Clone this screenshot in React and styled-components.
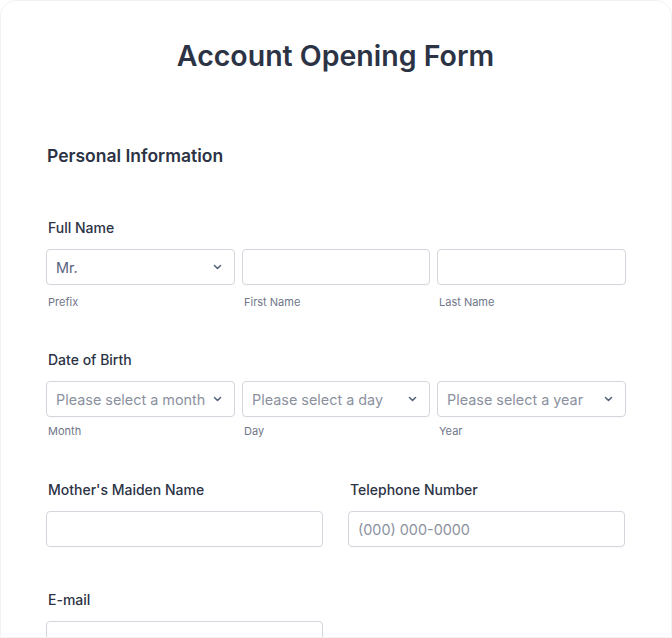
import React from 'react';
import styled, { createGlobalStyle } from 'styled-components';

const GlobalStyle = createGlobalStyle`
  body {
    margin: 0;
    background: #ffffff;
    font-family: Inter, "Noto Sans", "Liberation Sans", sans-serif;
    color: #2c3345;
  }
`;

const Card = styled.div`
  box-sizing: border-box;
  width: 672px;
  height: 638px;
  overflow: hidden;
  background: #fff;
  border: 1px solid #f1f2f4;
  border-radius: 16px 16px 0 0;
  padding: 38px 46px 0 45px;
`;

const Title = styled.h1`
  margin: 0;
  text-align: center;
  font-size: 28.5px;
  line-height: 34px;
  font-weight: 600;
  color: #2c3345;
`;

const SectionHeading = styled.h2`
  margin: 71px 0 0 1px;
  font-size: 17.5px;
  line-height: 24px;
  font-weight: 600;
  color: #2c3345;
`;

const Field = styled.div`
  margin-top: ${p => p.$top}px;
`;

const Label = styled.div`
  font-size: 14px;
  line-height: 20px;
  font-weight: 500;
  color: #2c3345;
  padding-left: 2px;
  margin-bottom: 11px;
`;

const Row = styled.div`
  display: grid;
  grid-template-columns: ${p => p.$cols};
  column-gap: ${p => p.$gap}px;
`;

const Col = styled.div`
  display: flex;
  flex-direction: column;
`;

const Box = styled.div`
  box-sizing: border-box;
  height: 36px;
  border: 1px solid #d3d6dc;
  border-radius: 4px;
  background: #fff;
  display: flex;
  align-items: center;
  justify-content: space-between;
  padding: 0 12px 0 9px;
  font-size: 14.4px;
  color: ${p => (p.$placeholder ? '#8b91a0' : '#57647e')};
  white-space: nowrap;
  box-shadow: 0 1px 1px rgba(0, 0, 0, 0.02);
`;

const Sub = styled.div`
  margin-top: ${p => p.$top || 9}px;
  font-size: 11px;
  line-height: 14px;
  color: #6f7689;
  padding-left: 2px;
`;

const Chevron = () => (
  <svg width="9" height="6" viewBox="0 0 9 6" fill="none">
    <path d="M1.5 1.5L4.5 4.5L7.5 1.5" stroke="#57647e" strokeWidth="1.6" strokeLinecap="round" strokeLinejoin="round" />
  </svg>
);

const Select = ({ value }) => (
  <Box $placeholder={value.startsWith('Please')}>
    <span>{value}</span>
    <Chevron />
  </Box>
);

export default function App() {
  return (
    <>
      <GlobalStyle />
      <Card>
        <Title>Account Opening Form</Title>
        <SectionHeading>Personal Information</SectionHeading>

        <Field $top={50}>
          <Label>Full Name</Label>
          <Row $cols="189px 188px 189px" $gap={7}>
            <Col>
              <Select value="Mr." />
              <Sub $top={10}>Prefix</Sub>
            </Col>
            <Col>
              <Box />
              <Sub $top={10}>First Name</Sub>
            </Col>
            <Col>
              <Box />
              <Sub $top={10}>Last Name</Sub>
            </Col>
          </Row>
        </Field>

        <Field $top={41}>
          <Label>Date of Birth</Label>
          <Row $cols="189px 188px 189px" $gap={7}>
            <Col>
              <Select value="Please select a month" />
              <Sub $top={7}>Month</Sub>
            </Col>
            <Col>
              <Select value="Please select a day" />
              <Sub $top={7}>Day</Sub>
            </Col>
            <Col>
              <Select value="Please select a year" />
              <Sub $top={7}>Year</Sub>
            </Col>
          </Row>
        </Field>

        <Field $top={42}>
          <Row $cols="277px 277px" $gap={25}>
            <Col>
              <Label>Mother's Maiden Name</Label>
              <Box />
            </Col>
            <Col>
              <Label>Telephone Number</Label>
              <Box $placeholder>(000) 000-0000</Box>
            </Col>
          </Row>
        </Field>

        <Field $top={43}>
          <Row $cols="277px" $gap={0}>
            <Col>
              <Label>E-mail</Label>
              <Box />
            </Col>
          </Row>
        </Field>
      </Card>
    </>
  );
}
